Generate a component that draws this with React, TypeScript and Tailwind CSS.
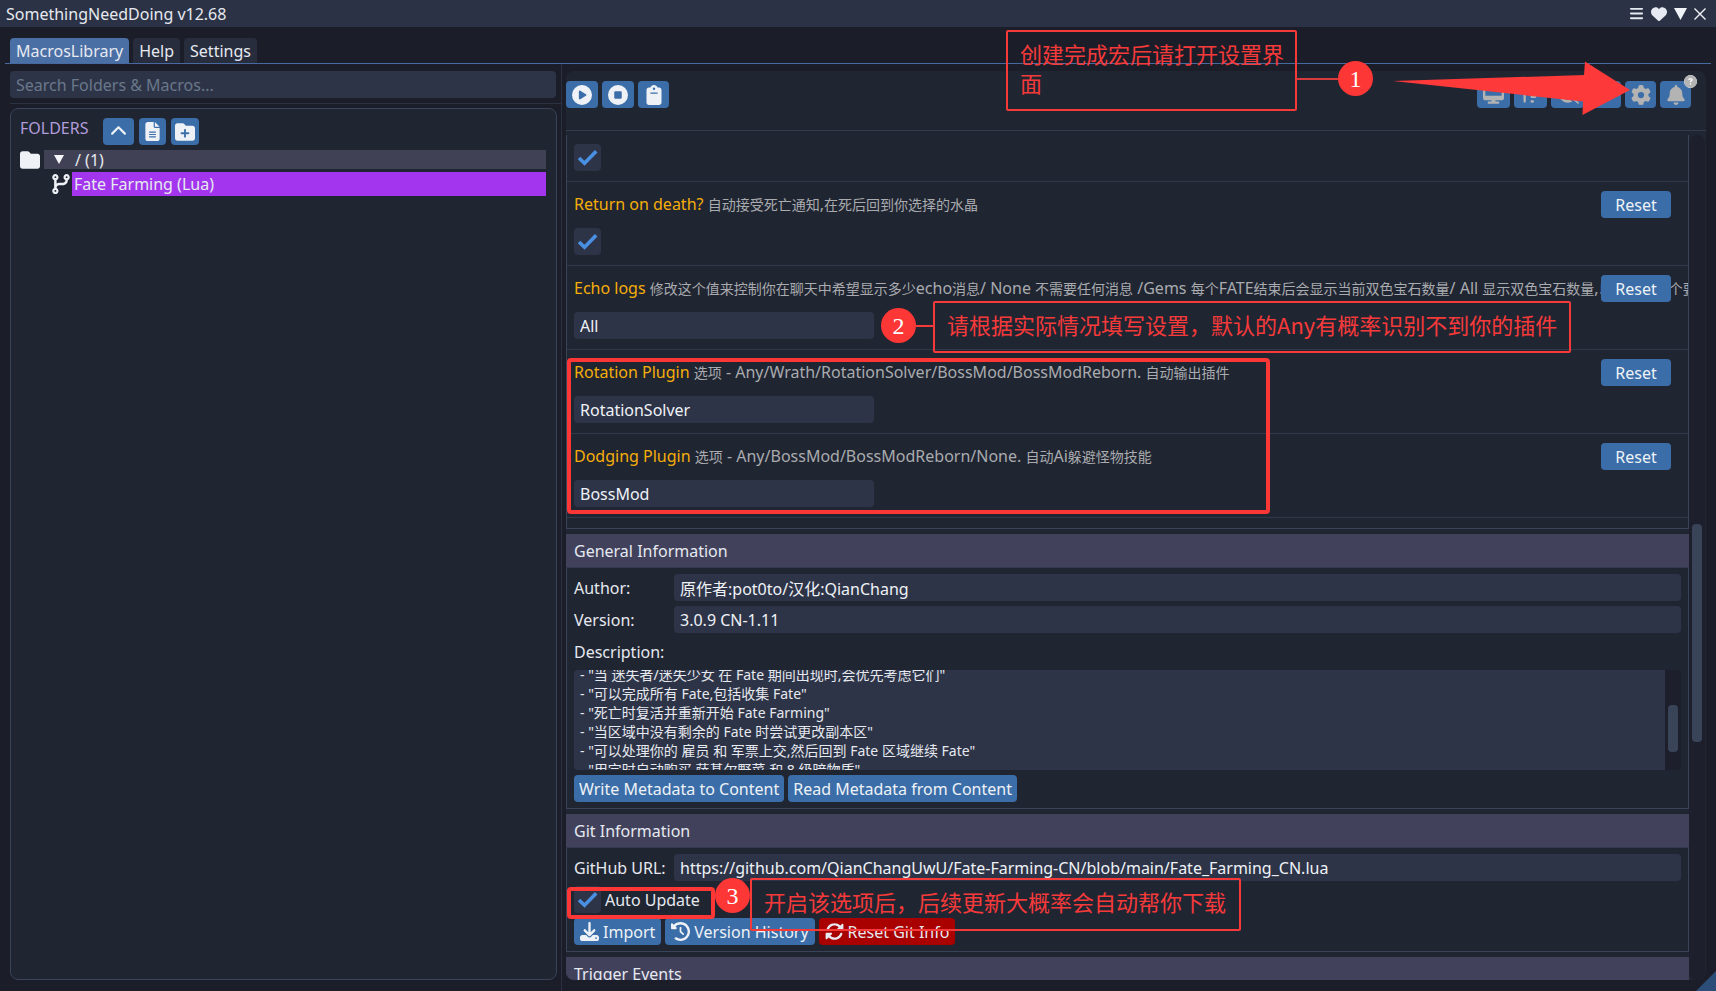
import React, { useEffect, useRef } from "react";
import {
  FaBars, FaHeart, FaChevronUp, FaFileLines, FaFolderPlus, FaFolder, FaCodeBranch, FaCirclePlay, FaCircleStop,
  FaClipboard, FaDesktop, FaArrowUpWideShort, FaEyeSlash, FaGear, FaBell, FaCircleQuestion, FaDownload,
  FaClockRotateLeft, FaRotate, FaPen,
} from "react-icons/fa6";

const base = "flex h-[27px] shrink-0 items-center justify-center rounded";
const button = base + " bg-[#3b6ea8] text-[#eef2f7]";
const field = "h-[27px] min-w-0 rounded bg-[#2e3447] px-1.5 text-[#eef2f7] outline-none";

function Mixed({ text }: { text: string }) {
  return (
    <>
      {text.split(/([\u4e00-\u9fff]+)/).map((part, i) =>
        i % 2 ? <span key={i} className="text-[14px]">{part}</span> : part
      )}
    </>
  );
}

function Check({ id, label }: { id: string; label: string }) {
  return (
    <span className="relative flex size-[27px] shrink-0">
      <input id={id} type="checkbox" defaultChecked aria-label={label}
        className="peer size-[27px] appearance-none rounded bg-[#2e3447]" />
      <svg viewBox="0 0 27 27" className="pointer-events-none invisible absolute inset-0 peer-checked:visible">
        <path d="M5 14 L10.5 19.200 L22.200 7.200" fill="none" stroke="#4a90e2" strokeWidth="3.600" />
      </svg>
    </span>
  );
}

function Option({ name, note, children }: { name: string; note: string; children: React.ReactNode }) {
  return (
    <div className="flex h-[84px] flex-col gap-[10px] border-b border-[#313849] px-[7px] pt-[9px]">
      <div className="relative flex h-[27px] items-center whitespace-nowrap">
        <div className="min-w-0 text-[#a9abae]">
          <span className="text-[#f5ae09]">{name}</span> <Mixed text={note} />
        </div>
        <button className={button + " absolute right-[10px] w-[70px]"}>Reset</button>
      </div>
      {children}
    </div>
  );
}

function Section({ title, children }: { title: string; children?: React.ReactNode }) {
  return (
    <section className="mb-[5px] shrink-0 border border-[#3a4358]">
      <h2 className="-mx-px -mt-px flex h-[34px] items-center border-b border-[#343a4e] bg-[#41415c] pl-2">{title}</h2>
      {children}
    </section>
  );
}

function Row({ id, label, value }: { id: string; label: string; value: string }) {
  return (
    <div className="flex items-center">
      <label htmlFor={id} className="w-[100px] shrink-0">{label}</label>
      <input id={id} defaultValue={value} className={field + " flex-1"} />
    </div>
  );
}

const description = [
  '- "当 迷失者/迷失少女 在 Fate 期间出现时,会优先考虑它们"',
  '- "可以完成所有 Fate,包括收集 Fate"',
  '- "死亡时复活并重新开始 Fate Farming"',
  '- "当区域中没有剩余的 Fate 时尝试更改副本区"',
  '- "可以处理你的 雇员 和 军票上交,然后回到 Fate 区域继续 Fate"',
  '- "用完时自动购买 萨基尔野菜 和 8 级暗物质"',
].join("\n");

function Badge({ children, place }: { children: string; place: string }) {
  return (
    <div className={"absolute flex size-[35px] items-center justify-center rounded-full bg-[#fd3636] font-['Liberation_Serif',serif] text-[24px] leading-none text-white " + place}>
      {children}
    </div>
  );
}

function Annotations() {
  const note = "absolute rounded-[2px] border-2 border-[#f63a3a] text-[22px] text-[#f63a3a] font-['Noto_Sans_CJK_SC',sans-serif]";
  return (
    <div className="pointer-events-none absolute inset-0">
      <div className={note + " right-[419px] top-[30px] h-[81px] w-[291px] pl-3 pt-[7px] leading-[29px]"}>
        创建完成宏后请打开设置界面
      </div>
      <div className="absolute right-[378px] top-[78px] h-[2px] w-[41px] bg-[#d93a3e]" />
      <Badge place="right-[343px] top-[61px]">1</Badge>
      <svg className="absolute right-[84px] top-[60px] h-[56px] w-[240px]" viewBox="1392 60 240 56">
        <path d="M1393 81 L1584 75 L1585 61.5 L1630 90 L1582.500 115 L1583 101.500 Z" fill="#fd3939" />
      </svg>
      <Badge place="left-[881px] top-[308px]">2</Badge>
      <div className="absolute left-[916px] top-[325px] h-[2px] w-[17px] bg-[#f63a3a]" />
      <div className={note + " left-[933px] top-[301px] flex h-[52px] w-[638px] items-center whitespace-nowrap px-3 pb-1.5"}>
        请根据实际情况填写设置，默认的Any有概率识别不到你的插件
      </div>
      <div className="absolute left-[567px] top-[358px] h-[156px] w-[703px] rounded border-4 border-[#fd3636]" />
      <div className="absolute left-[567px] top-[887px] h-[32px] w-[148px] rounded border-4 border-[#fd3636]" />
      <Badge place="left-[715px] top-[878px]">3</Badge>
      <div className={note + " left-[750px] top-[878px] flex h-[53px] w-[491px] items-center whitespace-nowrap px-3 pb-2"}>
        开启该选项后，后续更新大概率会自动帮你下载
      </div>
    </div>
  );
}

function Library() {
  return (
    <aside className="flex w-[552px] shrink-0 flex-col border-r border-[#2b3141]">
      <div className="border-b border-[#2b3141] pb-[5px] pt-[7px]">
        <input aria-label="Search" placeholder="Search Folders & Macros..."
          className={field + " w-[546px] placeholder:text-[#69788b]"} />
      </div>
      <div className="mb-[11px] mt-1 w-[547px] flex-1 rounded-lg border border-[#3a4458] bg-[#202532] px-[9px] pt-[9px]">
        <div className="flex gap-[5px]">
          <h2 className="w-[78px] text-[#b29ddb]">FOLDERS</h2>
          <button aria-label="Collapse" className={button + " w-[31px]"}><FaChevronUp size={17} /></button>
          <button aria-label="New macro" className={button + " w-[27px]"}><FaFileLines size={19} /></button>
          <button aria-label="New folder" className={button + " w-[28px]"}><FaFolderPlus size={20} /></button>
        </div>
        <div className="mt-[5px] flex h-[19px] items-center gap-1">
          <FaFolder size={20} className="shrink-0 text-[#eef2f7]" />
          <div className="flex h-[19px] w-[502px] items-center gap-[11px] bg-[#414155] pl-2.5">
            <svg width="10" height="9"><path d="M0 0H10L5 9Z" fill="#f4f6fa" /></svg>
            / (1)
          </div>
        </div>
        <div className="mt-[3px] flex h-6 items-center pl-[30px]">
          <FaCodeBranch size={20} className="w-[22px] shrink-0 text-[#eef2f7]" />
          <div className="flex h-6 w-[474px] items-center bg-[#a335ee] pl-0.5">Fate Farming (Lua)</div>
        </div>
      </div>
    </aside>
  );
}

function Toolbar() {
  const tool = base + " bg-[#3b6ea8] text-[#b3b3b3]";
  return (
    <div className="flex h-[60px] shrink-0 gap-1 border-b border-[#343b4d] pr-[15px] pt-[10px]">
      <button aria-label="Run" className={button + " w-8"}><FaCirclePlay size={20} /></button>
      <button aria-label="Stop" className={button + " w-8"}><FaCircleStop size={20} /></button>
      <button aria-label="Copy" className={button + " w-[31px]"}><FaClipboard size={20} /></button>
      <div className="flex-1" />
      <button aria-label="Display" className={tool + " w-[33px]"}><FaDesktop size={21} /></button>
      <button aria-label="Sort" className={tool + " w-[33px]"}><FaArrowUpWideShort size={21} /></button>
      <button aria-label="Hide" className={tool + " w-[33px]"}><FaEyeSlash size={22} /></button>
      <button aria-label="Edit" className={tool + " w-[33px]"}><FaPen size={12} /></button>
      <button aria-label="Settings" className={tool + " w-[31px]"}><FaGear size={20} /></button>
      <button aria-label="Notifications" className={tool + " relative w-[31px]"}>
        <FaBell size={20} />
        <FaCircleQuestion size={13} className="absolute -right-1.5 -top-1.5 rounded-full bg-white text-[#b3b3b3]" />
      </button>
    </div>
  );
}

function Editor() {
  const area = useRef<HTMLTextAreaElement>(null);
  useEffect(() => {
    if (area.current) area.current.scrollTop = 5;
  }, []);
  return (
    <main className="mb-[11px] ml-1 mt-[7px] flex min-w-0 flex-1 flex-col overflow-hidden rounded-lg bg-[#202532]">
      <Toolbar />
      <div className="mt-1 flex min-h-0 flex-1 pr-px">
        <div className="flex min-w-0 flex-1 flex-col overflow-hidden">
          <div className="mb-[5px] shrink-0 overflow-hidden border-x border-b border-[#3a4358] pb-[10px]">
            <div className="h-[47px] border-b border-[#313849] px-[7px] pt-[9px]"><Check id="first" label="Enabled" /></div>
            <Option name="Return on death?" note="自动接受死亡通知,在死后回到你选择的水晶">
              <Check id="death" label="Return on death?" />
            </Option>
            <Option name="Echo logs" note="修改这个值来控制你在聊天中希望显示多少echo消息/ None 不需要任何消息 /Gems 每个FATE结束后会显示当前双色宝石数量/ All 显示双色宝石数量,以及显示下个要">
              <input aria-label="Echo logs" defaultValue="All" className={field + " w-[300px]"} />
            </Option>
            <Option name="Rotation Plugin" note="选项 - Any/Wrath/RotationSolver/BossMod/BossModReborn. 自动输出插件">
              <input aria-label="Rotation Plugin" defaultValue="RotationSolver" className={field + " w-[300px]"} />
            </Option>
            <Option name="Dodging Plugin" note="选项 - Any/BossMod/BossModReborn/None. 自动Ai躲避怪物技能">
              <input aria-label="Dodging Plugin" defaultValue="BossMod" className={field + " w-[300px]"} />
            </Option>
          </div>
          <Section title="General Information">
            <div className="flex flex-col gap-[5px] px-[7px] py-1.5">
              <Row id="author" label="Author:" value="原作者:pot0to/汉化:QianChang" />
              <Row id="version" label="Version:" value="3.0.9 CN-1.11" />
              <label htmlFor="description" className="flex h-[27px] items-center">Description:</label>
              <div className="flex h-[100px] overflow-hidden rounded">
                <textarea id="description" ref={area} defaultValue={description}
                  className="block h-full min-w-0 flex-1 resize-none overflow-hidden bg-[#2e3447] px-1.5 text-[14px] leading-[19px] outline-none" />
                <div className="w-4 bg-[#1d202c] px-[3px] pt-[35px]"><div className="h-[47px] rounded bg-[#3a4459]" /></div>
              </div>
              <div className="flex gap-1">
                <button className={button + " px-[5px]"}>Write Metadata to Content</button>
                <button className={button + " px-[5px]"}>Read Metadata from Content</button>
              </div>
            </div>
          </Section>
          <Section title="Git Information">
            <div className="flex flex-col gap-[5px] px-[7px] py-1.5">
              <Row id="url" label="GitHub URL:" value="https://github.com/QianChangUwU/Fate-Farming-CN/blob/main/Fate_Farming_CN.lua" />
              <div className="flex items-center gap-1">
                <Check id="auto" label="Auto Update" />
                <label htmlFor="auto">Auto Update</label>
              </div>
              <div className="flex gap-1">
                <button className={button + " gap-1 px-1.5"}><FaDownload size={19} />Import</button>
                <button className={button + " gap-1 px-1.5"}><FaClockRotateLeft size={19} />Version History</button>
                <button className={base + " gap-1 bg-[#a90000] px-1.5"}><FaRotate size={19} />Reset Git Info</button>
              </div>
            </div>
          </Section>
          <Section title="Trigger Events" />
        </div>
        <div className="w-4 rounded-lg bg-[#1d202c] px-[3px] pt-[389px]"><div className="h-[218px] rounded bg-[#3a4459]" /></div>
      </div>
    </main>
  );
}

export default function App() {
  const tab = "flex h-[25px] items-center rounded-t px-1.5";
  return (
    <div className="relative flex h-screen min-h-[640px] flex-col overflow-hidden bg-[#1b1e29] font-['Noto_Sans','Noto_Sans_CJK_SC',sans-serif] text-[16px] leading-5 text-[#e6e9f0]">
      <header className="flex h-[27px] shrink-0 items-center gap-[7px] bg-[#2b3245] pl-1.5 pr-2.5">
        <h1 className="flex-1">SomethingNeedDoing v12.68</h1>
        <button aria-label="Menu"><FaBars size={15} /></button>
        <button aria-label="Favourite"><FaHeart size={16} /></button>
        <button aria-label="Collapse window"><svg width="13" height="12"><path d="M0 0H13L6.500 12Z" fill="#f0f3f8" /></svg></button>
        <button aria-label="Close"><svg width="12" height="12"><path d="M.5 .5L11.500 11.500M11.500 .5L.5 11.500" stroke="#f0f3f8" strokeWidth="1.400" /></svg></button>
      </header>
      <nav className="mx-[5px] mt-[11px] flex shrink-0 gap-1 border-b border-[#466a9f] pl-[5px]">
        <button className={tab + " bg-[#4a6fa5]"}>MacrosLibrary</button>
        <button className={tab + " bg-[#272d3d]"}>Help</button>
        <button className={tab + " bg-[#272d3d]"}>Settings</button>
      </nav>
      <div className="flex min-h-0 flex-1 pl-2.5 pr-2.5">
        <Library />
        <Editor />
      </div>
      <svg className="absolute bottom-0 right-0" width="20" height="20"><path d="M20 0V20H0Z" fill="#2b4d77" /></svg>
      <Annotations />
    </div>
  );
}
